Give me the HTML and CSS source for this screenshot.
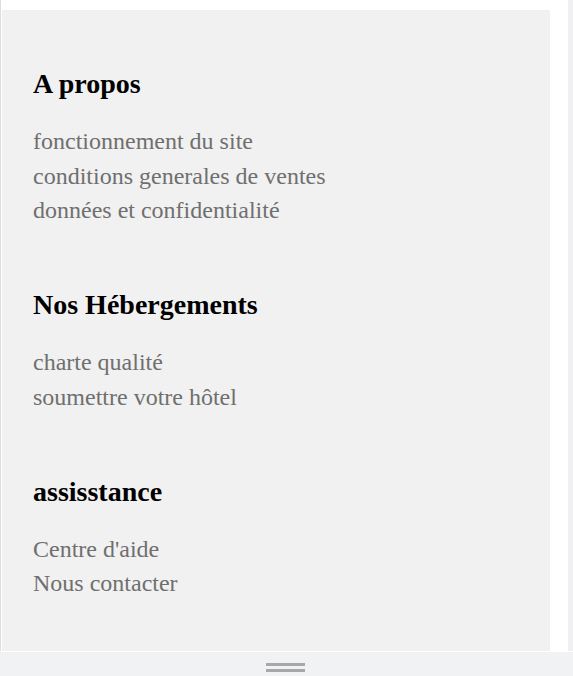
FILE: index.html
```html
<!DOCTYPE html>
<html lang="fr">
<head>
<meta charset="utf-8">
<title>Footer</title>
<link rel="stylesheet" href="styles.css">
</head>
<body>
<div class="frame">
  <div class="edge"></div>
  <div class="panel">
    <section class="group">
      <h3 class="title">A propos</h3>
      <ul class="links">
        <li>fonctionnement du site</li>
        <li>conditions generales de ventes</li>
        <li>données et confidentialité</li>
      </ul>
    </section>
    <section class="group">
      <h3 class="title">Nos Hébergements</h3>
      <ul class="links">
        <li>charte qualité</li>
        <li>soumettre votre hôtel</li>
      </ul>
    </section>
    <section class="group">
      <h3 class="title">assisstance</h3>
      <ul class="links">
        <li>Centre d'aide</li>
        <li>Nous contacter</li>
      </ul>
    </section>
  </div>
  <div class="spacer"></div>
  <div class="strip"></div>
</div>
<div class="bottom">
  <div class="handle"><span></span><span></span></div>
</div>
</body>
</html>
```

FILE: styles.css
```css
html, body {
  margin: 0;
  padding: 0;
  background: #ffffff;
}
body {
  width: 573px;
  height: 676px;
  overflow: hidden;
  font-family: "Liberation Serif", "Times New Roman", serif;
}
.frame {
  display: flex;
  height: 651px;
}
.edge {
  width: 1px;
  background: #dddddd;
  margin-right: 1px;
}
.panel {
  width: 517px;
  margin-top: 10px;
  background: #f1f1f1;
  padding: 58px 0 0 31px;
  display: flex;
  flex-direction: column;
  gap: 61.5px;
}
.spacer {
  width: 18px;
}
.strip {
  width: 5px;
  background: #f0f0f2;
}
.title {
  margin: 0;
  font-size: 28px;
  line-height: 32px;
  font-weight: bold;
  color: #000000;
}
.links {
  list-style: none;
  margin: 24px 0 0 0;
  padding: 0;
  font-size: 24px;
  line-height: 34.5px;
  color: #6f6f6f;
}
.bottom {
  border-top: 1px solid #ffffff;
  height: 24px;
  background: #f1f2f4;
  display: flex;
  justify-content: center;
}
.handle {
  display: flex;
  flex-direction: column;
  gap: 3px;
  padding-top: 11px;
  margin-left: -3px;
}
.handle span {
  display: block;
  width: 39px;
  height: 3px;
  background: #a8a8a8;
}
```
